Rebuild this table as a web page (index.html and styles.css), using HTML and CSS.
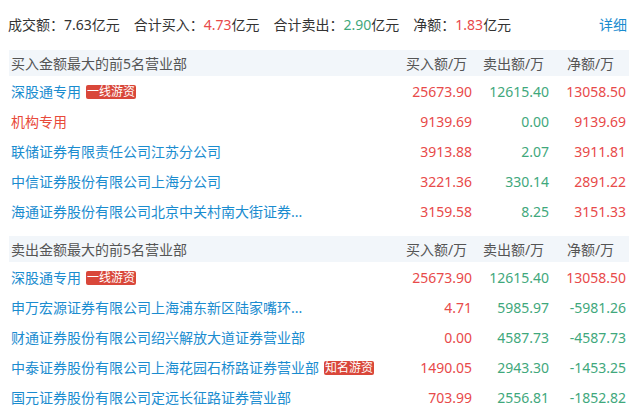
FILE: index.html
```html
<!DOCTYPE html>
<html lang="zh-CN">
<head>
<meta charset="utf-8">
<link rel="stylesheet" href="styles.css">
</head>
<body>
<div class="wrap">
  <div class="summary">
    <div class="stats">
      <span class="stat">成交额：7.63亿元</span>
      <span class="stat">合计买入：<span class="up">4.73</span>亿元</span>
      <span class="stat">合计卖出：<span class="down">2.90</span>亿元</span>
      <span class="stat">净额：<span class="up">1.83</span>亿元</span>
    </div>
    <a class="more">详细</a>
  </div>

  <table class="tbl">
    <thead>
      <tr><th class="name">买入金额最大的前5名营业部</th><th>买入额/万</th><th>卖出额/万</th><th>净额/万</th></tr>
    </thead>
    <tbody>
      <tr><td class="name"><span class="link">深股通专用</span><span class="tag">一线游资</span></td><td class="up">25673.90</td><td class="down">12615.40</td><td class="up">13058.50</td></tr>
      <tr><td class="name"><span class="link org">机构专用</span></td><td class="up">9139.69</td><td class="down">0.00</td><td class="up">9139.69</td></tr>
      <tr><td class="name"><span class="link">联储证券有限责任公司江苏分公司</span></td><td class="up">3913.88</td><td class="down">2.07</td><td class="up">3911.81</td></tr>
      <tr><td class="name"><span class="link">中信证券股份有限公司上海分公司</span></td><td class="up">3221.36</td><td class="down">330.14</td><td class="up">2891.22</td></tr>
      <tr><td class="name"><span class="link">海通证券股份有限公司北京中关村南大街证券...</span></td><td class="up">3159.58</td><td class="down">8.25</td><td class="up">3151.33</td></tr>
    </tbody>
  </table>

  <table class="tbl second">
    <thead>
      <tr><th class="name">卖出金额最大的前5名营业部</th><th>买入额/万</th><th>卖出额/万</th><th>净额/万</th></tr>
    </thead>
    <tbody>
      <tr><td class="name"><span class="link">深股通专用</span><span class="tag">一线游资</span></td><td class="up">25673.90</td><td class="down">12615.40</td><td class="up">13058.50</td></tr>
      <tr><td class="name"><span class="link">申万宏源证券有限公司上海浦东新区陆家嘴环...</span></td><td class="up">4.71</td><td class="down">5985.97</td><td class="down">-5981.26</td></tr>
      <tr><td class="name"><span class="link">财通证券股份有限公司绍兴解放大道证券营业部</span></td><td class="up">0.00</td><td class="down">4587.73</td><td class="down">-4587.73</td></tr>
      <tr><td class="name"><span class="link">中泰证券股份有限公司上海花园石桥路证券营业部</span><span class="tag">知名游资</span></td><td class="up">1490.05</td><td class="down">2943.30</td><td class="down">-1453.25</td></tr>
      <tr><td class="name"><span class="link">国元证券股份有限公司定远长征路证券营业部</span></td><td class="up">703.99</td><td class="down">2556.81</td><td class="down">-1852.82</td></tr>
    </tbody>
  </table>
</div>
</body>
</html>
```

FILE: styles.css
```css
html, body {
  margin: 0;
  padding: 0;
  background: #fff;
}
body {
  font-family: "Noto Sans", "Noto Sans CJK SC", sans-serif;
  font-size: 14px;
  color: #333;
}
.wrap {
  width: 620px;
  padding-left: 9px;
}
.summary {
  display: flex;
  justify-content: space-between;
  align-items: center;
  height: 20px;
  line-height: 20px;
  margin: 15px 0 15px -1px;
  padding-right: 2px;
}
.stats {
  display: flex;
  gap: 14px;
}
.more {
  color: #1a8ccf;
  cursor: pointer;
}
.up { color: #e84a4a; }
.down { color: #3fa87c; }
.tbl {
  width: 620px;
  border-collapse: collapse;
  table-layout: fixed;
}
.tbl.second {
  margin-top: 10px;
}
.tbl th {
  background: #f2f6fa;
  color: #555;
  font-weight: normal;
  height: 26px;
  padding: 0;
  width: 77px;
  text-align: center;
}
.tbl th.name {
  width: auto;
  text-align: left;
  padding-left: 2px;
}
.tbl td {
  height: 30px;
  padding: 0 3px 0 0;
  text-align: right;
  white-space: nowrap;
}
.tbl td.name {
  text-align: left;
  padding-left: 2px;
}
.link {
  color: #1a8ccf;
}
.link.org {
  color: #e84a3a;
}
.tag {
  display: inline-block;
  margin-left: 5px;
  padding: 0 1px;
  background: #d9473a;
  color: #fff;
  font-size: 12px;
  line-height: 14px;
  border-radius: 2px;
  vertical-align: 1px;
}
```
